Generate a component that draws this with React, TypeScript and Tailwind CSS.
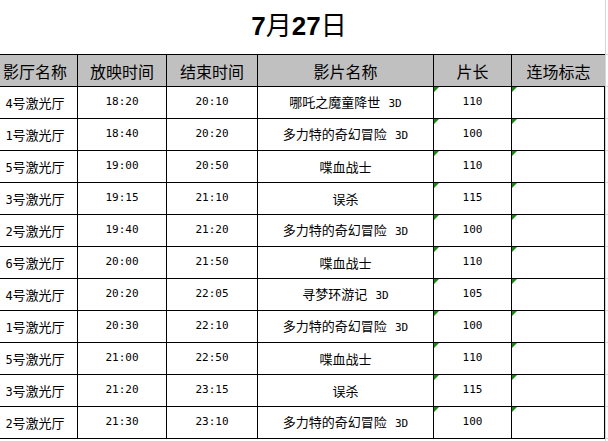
const rows = [
  ["4号激光厅", "18:20", "20:10", "哪吒之魔童降世", true, "110"],
  ["1号激光厅", "18:40", "20:20", "多力特的奇幻冒险", true, "100"],
  ["5号激光厅", "19:00", "20:50", "喋血战士", false, "110"],
  ["3号激光厅", "19:15", "21:10", "误杀", false, "115"],
  ["2号激光厅", "19:40", "21:20", "多力特的奇幻冒险", true, "100"],
  ["6号激光厅", "20:00", "21:50", "喋血战士", false, "110"],
  ["4号激光厅", "20:20", "22:05", "寻梦环游记", true, "105"],
  ["1号激光厅", "20:30", "22:10", "多力特的奇幻冒险", true, "100"],
  ["5号激光厅", "21:00", "22:50", "喋血战士", false, "110"],
  ["3号激光厅", "21:20", "23:15", "误杀", false, "115"],
  ["2号激光厅", "21:30", "23:10", "多力特的奇幻冒险", true, "100"],
] as const

const headers = ["影厅名称", "放映时间", "结束时间", "影片名称", "片长", "连场标志"]

const cjk = "font-['Noto_Sans_CJK_SC',sans-serif]"
const mono = "font-['DejaVu_Sans_Mono','Noto_Sans_CJK_SC',monospace]"
const cols = "grid grid-cols-[85px_89px_91px_176px_78px_93px]"

function Flag() {
  // excel "number stored as text" marker
  return (
    <span className="absolute left-0 top-0 h-0 w-0 border-t-[5px] border-r-[5px] border-t-[#148a14] border-r-transparent" />
  )
}

export default function App() {
  return (
    <div className="flex h-[441px] w-[608px] overflow-hidden bg-white text-black">
      <div className="ml-[-7px] flex w-[612px] shrink-0 flex-col">
        <div className="flex h-[54px] items-center justify-center pb-[2px]">
          <span className="font-['Liberation_Sans','Noto_Sans_CJK_SC',sans-serif] text-[26px] font-bold leading-none">
            7<span className="font-normal">月</span>27<span className="font-normal">日</span>
          </span>
        </div>
        <div className="border-t border-black">
          <div className={cols}>
            {headers.map((h, i) => (
              <div
                key={h}
                className={`flex h-[32px] items-center justify-center border-b border-black bg-[#c0c0c0] text-[16px] ${cjk} ${
                  i < 5 ? "border-r" : ""
                }`}
              >
                {h}
              </div>
            ))}
          </div>
          {rows.map((r, idx) => (
            <div key={idx} className={cols}>
              <div className={`flex h-[32px] items-center justify-center border-b border-r border-black text-[13px] ${cjk}`}>
                <span>
                  <span className={`${mono} text-[12px]`}>{r[0].slice(0, 1)}</span>
                  {r[0].slice(1)}
                </span>
              </div>
              <div className={`flex h-[32px] items-center justify-center border-b border-r border-black text-[11px] ${mono}`}>
                {r[1]}
              </div>
              <div className={`flex h-[32px] items-center justify-center border-b border-r border-black text-[11px] ${mono}`}>
                {r[2]}
              </div>
              <div className={`flex h-[32px] items-center justify-center border-b border-r border-black text-[13px] ${cjk}`}>
                <span>
                  {r[3]}
                  {r[4] && <span className={`${mono} ml-[8px] text-[11px]`}>3D</span>}
                </span>
              </div>
              <div className={`relative flex h-[32px] items-center justify-center border-b border-r border-black text-[11px] ${mono}`}>
                <Flag />
                {r[5]}
              </div>
              <div className="relative h-[32px] border-b border-r border-black">
                <Flag />
              </div>
            </div>
          ))}
        </div>
      </div>
      <div className="flex flex-1 flex-col border-l border-[#d4d4d4]">
        <div className="h-[55px] shrink-0 border-b border-[#d4d4d4]" />
        {Array.from({ length: 12 }).map((_, i) => (
          <div key={i} className="h-[32px] shrink-0 border-b border-[#d4d4d4]" />
        ))}
      </div>
    </div>
  )
}
